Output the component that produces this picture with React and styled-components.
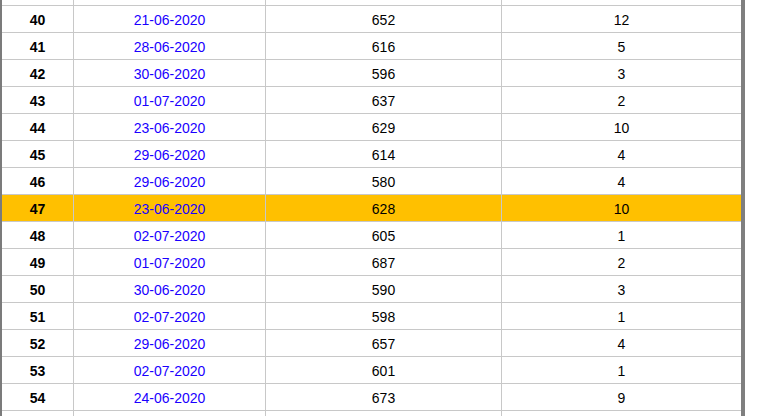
import styled, { createGlobalStyle } from 'styled-components';

const GlobalStyle = createGlobalStyle`
  html, body {
    margin: 0;
    padding: 0;
    background: #ffffff;
  }
  body {
    font-family: "Liberation Sans", Arial, sans-serif;
  }
`;

const Viewport = styled.div`
  width: 739px;
  height: 416px;
  overflow: hidden;
  border-left: 2px solid #7b7b7b;
  border-right: 4px solid #7f7f7f;
  background: #ffffff;
`;

const Sheet = styled.div`
  margin-top: -21px;
`;

const Row = styled.div`
  display: grid;
  grid-template-columns: 72px 192px 236px 239px;
  height: 27px;
  box-sizing: border-box;
  border-bottom: 1px solid #c8c8c8;
  background: ${p => (p.$highlight ? '#ffc000' : '#ffffff')};
`;

const Cell = styled.div`
  box-sizing: border-box;
  border-right: ${p => (p.$last ? 'none' : '1px solid #c8c8c8')};
  display: flex;
  align-items: center;
  justify-content: center;
  padding-top: 2px;
  font-size: 14px;
  font-weight: ${p => (p.$bold ? 700 : 400)};
  color: ${p => (p.$link ? '#1a00ff' : '#000000')};
`;

// first and last rows sit half out of view, so they carry no text
const rows = [
  [39, '', '', ''],
  [40, '21-06-2020', '652', '12'],
  [41, '28-06-2020', '616', '5'],
  [42, '30-06-2020', '596', '3'],
  [43, '01-07-2020', '637', '2'],
  [44, '23-06-2020', '629', '10'],
  [45, '29-06-2020', '614', '4'],
  [46, '29-06-2020', '580', '4'],
  [47, '23-06-2020', '628', '10'],
  [48, '02-07-2020', '605', '1'],
  [49, '01-07-2020', '687', '2'],
  [50, '30-06-2020', '590', '3'],
  [51, '02-07-2020', '598', '1'],
  [52, '29-06-2020', '657', '4'],
  [53, '02-07-2020', '601', '1'],
  [54, '24-06-2020', '673', '9'],
  [55, '', '', ''],
];

export default function App() {
  return (
    <>
      <GlobalStyle />
      <Viewport>
        <Sheet>
          {rows.map(([no, date, score, rank]) => (
            <Row key={no} $highlight={no === 47}>
              <Cell $bold>{date ? no : ''}</Cell>
              <Cell $link>{date}</Cell>
              <Cell>{score}</Cell>
              <Cell $last>{rank}</Cell>
            </Row>
          ))}
        </Sheet>
      </Viewport>
    </>
  );
}
